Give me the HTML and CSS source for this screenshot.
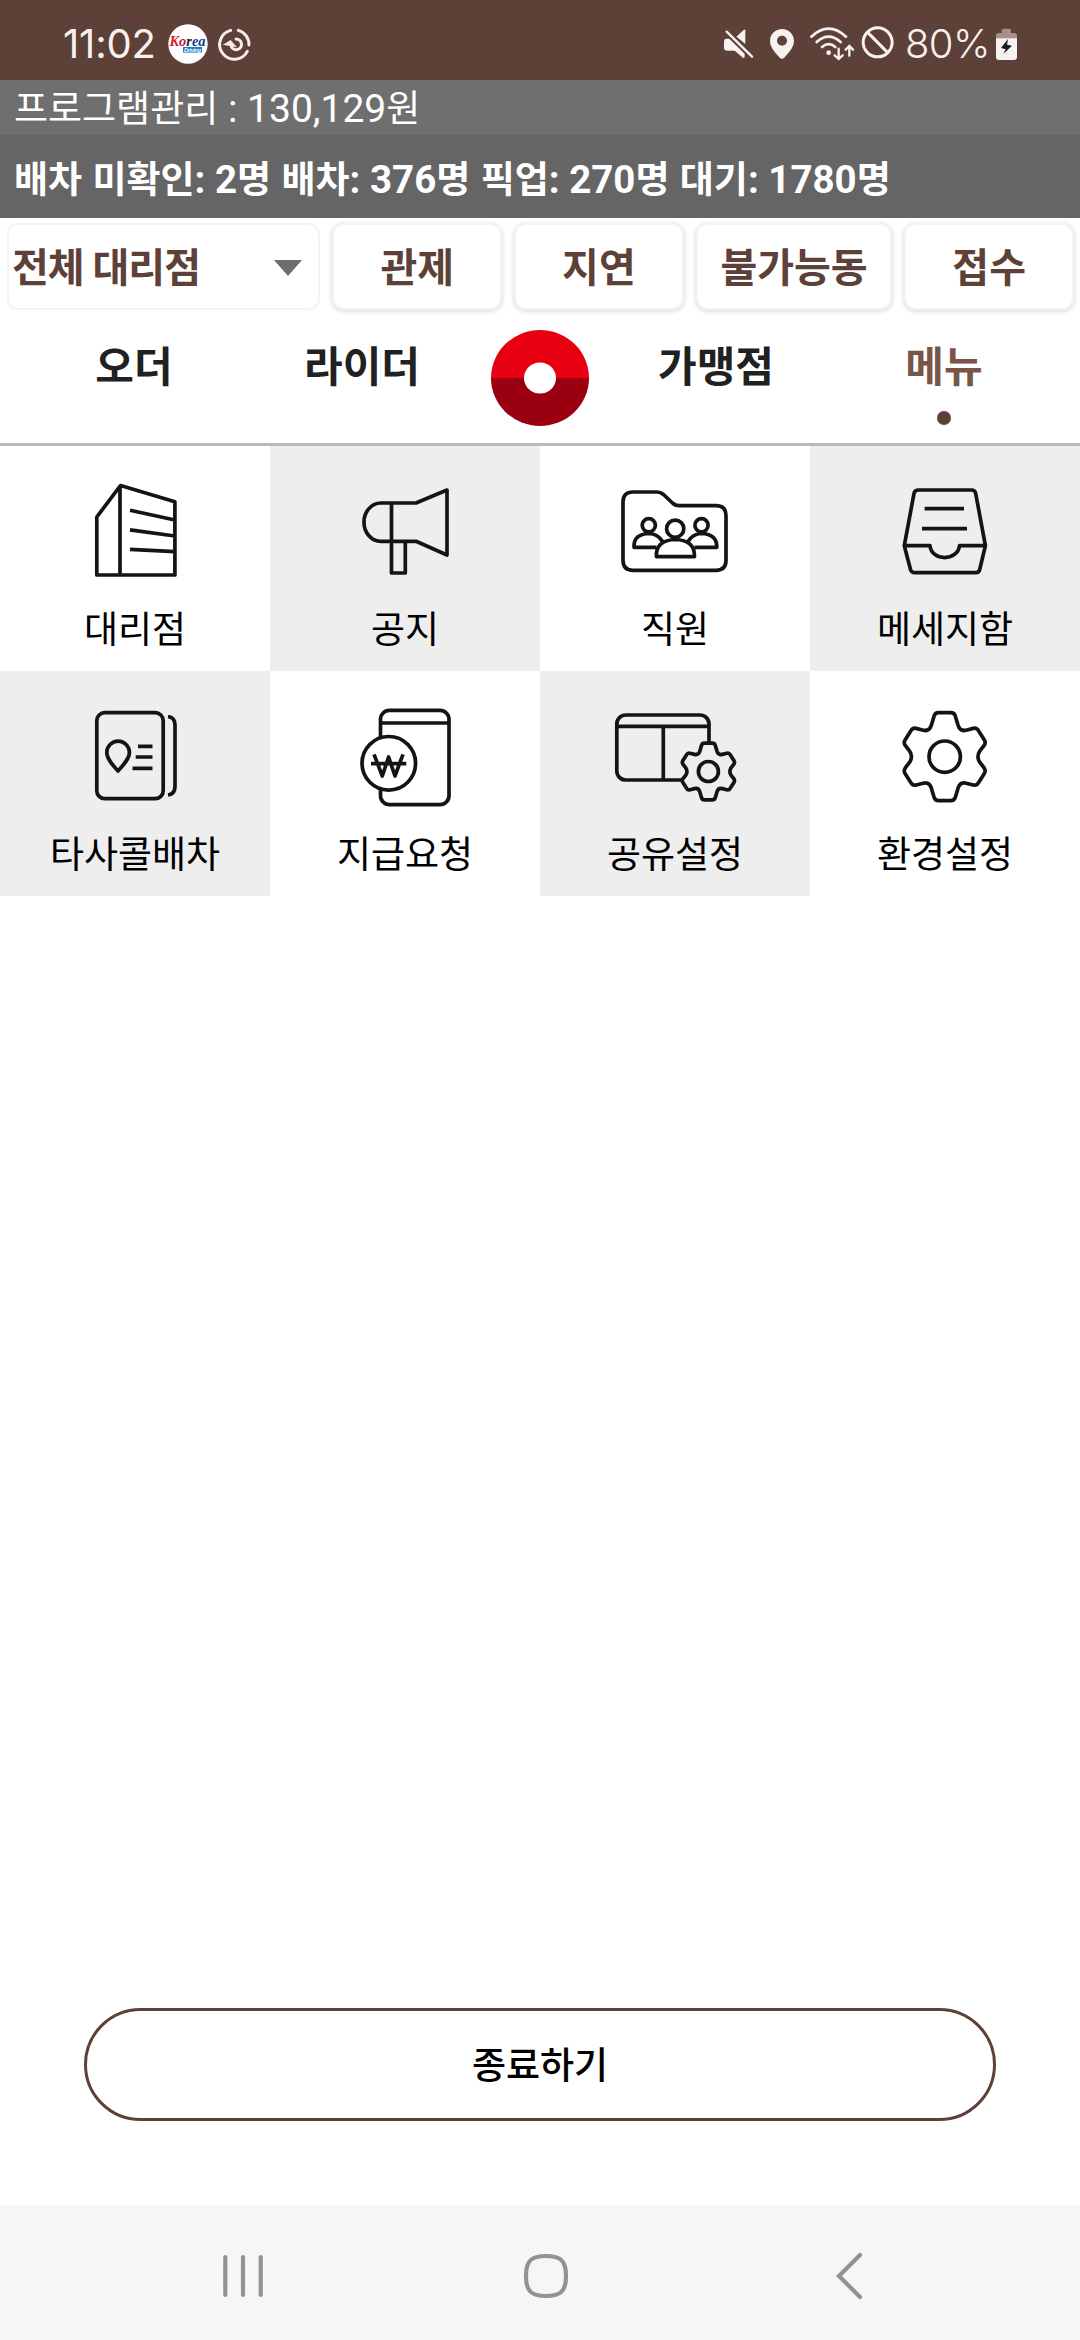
FILE: index.html
```html
<!DOCTYPE html>
<html lang="ko">
<head>
<meta charset="utf-8">
<title>메뉴</title>
<link rel="stylesheet" href="styles.css">
</head>
<body>
<div class="screen">
  <header class="status">
    <span class="clock">11:02</span>
    <svg class="badge" width="40" height="40" viewBox="0 0 40 40">
      <circle cx="20" cy="20" r="19.7" fill="#fff"/>
      <text x="1.5" y="22" class="badge-name" textLength="36" lengthAdjust="spacingAndGlyphs"><tspan fill="#e0142c">K</tspan><tspan fill="#c01830">o</tspan><tspan fill="#222">r</tspan><tspan fill="#143c8c">ea</tspan></text>
      <rect x="15" y="23" width="19" height="5.6" fill="#1f78c0"/>
      <text x="16" y="27.8" class="badge-sub" textLength="17">Driving</text>
    </svg>
    <svg class="swirl" width="36" height="50" viewBox="168 0 108 150" fill="none" stroke="#f7ece8" stroke-width="9" stroke-linecap="round">
      <path d="M212 31A44 44 0 1 0 262 94"/>
      <path d="M235 31A44 44 0 0 1 267 75"/>
      <path d="M228 57A16 16 0 1 1 214 80"/>
      <path d="M201 72L211 66L219 75Z" fill="#f7ece8"/>
    </svg>
    <span class="status-gap"></span>
    <svg class="mute" width="32" height="50" viewBox="36 0 96 150">
      <path d="M49 56L58 56L104 101V109Q104 117 97 112L74 92H52Q42 92 42 83V66Q42 56 49 56Z" fill="#f7f1ef"/>
      <path d="M106 31V72L79 50L101 30Q106 26 106 31Z" fill="#f7f1ef"/>
      <path d="M54 31L130 106" stroke="#5d4037" stroke-width="8"/>
      <path d="M50 35L126 110" stroke="#f7f1ef" stroke-width="7" stroke-linecap="round"/>
    </svg>
    <svg class="pin" width="28" height="50" viewBox="174 0 84 150">
      <path fill-rule="evenodd" fill="#f7f1ef" d="M216 27C196 27 180 43 180 63C180 82 196 99 210 114Q216 119 222 114C236 99 252 82 252 63C252 43 236 27 216 27ZM216 47A15 15 0 1 1 216 77A15 15 0 1 1 216 47Z"/>
    </svg>
    <svg class="wifi" width="47" height="50" viewBox="297 0 141 150" fill="none" stroke="#f7f1ef" stroke-width="8" stroke-linecap="round">
      <path d="M304 50Q356 2 408 50"/>
      <path d="M320 66Q356 34 392 66"/>
      <path d="M336 81Q356 64 376 81"/>
      <circle cx="356" cy="98" r="7" fill="#f7f1ef" stroke="none"/>
      <g stroke-width="7"><path d="M386 86V116M374 106L386 117L398 106"/><path d="M418 107V79M407 89L418 78L429 89"/></g>
    </svg>
    <svg class="block" width="35" height="50" viewBox="450 0 105 150" fill="none" stroke="#f7f1ef" stroke-width="9">
      <circle cx="503" cy="67" r="43.5"/><path d="M473 37L533 98"/>
    </svg>
    <span class="percent">80%</span>
    <svg class="battery" width="23" height="50" viewBox="855 0 69 150">
      <path d="M858 56V47Q858 39 866 39H875V31Q875 26 881 26H897Q903 26 903 31V39H913Q921 39 921 47V56Z" fill="#a58f88"/>
      <path d="M858 55H921V111Q921 120 912 120H867Q858 120 858 111Z" fill="#f7f1ef"/>
      <path d="M894 57L873 84L887 88L880 102L906 77L891 74Z" fill="#1b1b1b"/>
    </svg>
  </header>

  <div class="balance"><span class="ko">프로그램관리</span> : 130,129<span class="ko">원</span></div>
  <div class="counts"><span class="ko">배차 미확인</span>: 2<span class="ko">명 배차</span>: 376<span class="ko">명 픽업</span>: 270<span class="ko">명 대기</span>: 1780<span class="ko">명</span></div>

  <div class="filters">
    <div class="select"><span>전체 대리점</span><i class="caret"></i></div>
    <button class="chip">관제</button>
    <button class="chip">지연</button>
    <button class="chip wide">불가능동</button>
    <button class="chip">접수</button>
  </div>

  <nav class="tabs">
    <div class="tab">오더</div>
    <div class="tab">라이더</div>
    <div class="logo">
      <svg width="98" height="96" viewBox="0 0 98 96">
        <path d="M0 48A49 48 0 0 1 98 48Z" fill="#e60012"/>
        <path d="M0 48A49 48 0 0 0 98 48Z" fill="#9b0010"/>
        <ellipse cx="49" cy="48" rx="16" ry="15.5" fill="#fff"/>
      </svg>
    </div>
    <div class="tab">가맹점</div>
    <div class="tab active">메뉴<i class="dot"></i></div>
  </nav>

  <main class="grid">
    <div class="cell">
      <svg class="icon" viewBox="0 0 160 120">
        <path d="M41.8 51L65.5 19.5L119.9 35.7V109H41.8ZM65 20V109M75 44.3L119.9 54M75 63.9L119.9 70M75 83.3L119.9 85.6"/>
      </svg><span>대리점</span>
    </div>
    <div class="cell shade">
      <svg class="icon" viewBox="0 0 160 120">
        <path d="M91 37H56A17 19.1 0 0 0 56 75.3H91L122 89V24ZM66.5 37V107H80.3V75.3"/>
      </svg><span>공지</span>
    </div>
    <div class="cell">
      <svg class="icon" viewBox="0 0 160 120">
        <path d="M38 26H62Q65.500 26 68.500 28.500L78 37.500Q80.500 39.700 84 39.700H121Q131 39.700 131 49.700V94.300Q131 104.300 121 104.300H38Q28 104.300 28 94.300V36Q28 26 38 26Z"/>
        <circle cx="53.800" cy="59.300" r="6.600"/><circle cx="80.200" cy="62.700" r="8.600"/><circle cx="106.500" cy="59.300" r="6.600"/>
        <path d="M61.400 81.300H39Q38.500 68 54 67.500Q63 68 67.500 75.500M99.500 81.300H121.800Q122 68 106.500 67.500Q97.500 68 93 75.500M61.400 90.700Q60.500 74 80.400 73.500Q100 74 99.500 90.700Z"/>
      </svg><span>직원</span>
    </div>
    <div class="cell shade">
      <svg class="icon" viewBox="0 0 160 120">
        <path d="M53.500 24H106.500Q110 24 110.700 27.500L120.400 79.700L114.700 103.500Q114 106.700 111 106.700H49.500Q46.500 106.700 45.500 103.500L39.300 79.700L49 27.500Q49.700 24 53.500 24ZM39.300 79.700H65C66.500 95.500 92.500 95.500 94.500 79.700H120.400M59.600 42.700H99M57 62.700H102"/>
      </svg><span>메세지함</span>
    </div>
    <div class="cell shade">
      <svg class="icon" viewBox="0 0 160 120">
        <rect x="41.800" y="21.700" width="66.400" height="86" rx="8"/>
        <path d="M113 25.500Q120 26.500 120 34V95.500Q120 103 113 104M63 80C57 73.500 51.800 67.500 51.800 61.500A11.300 11.300 0 0 1 74.400 61.500C74.400 67.500 69 73.500 63 80ZM83 55.300H97.500M80.700 66H97.500M77.500 77.300H97.500"/>
      </svg><span>타사콜배차</span>
    </div>
    <div class="cell">
      <svg class="icon" viewBox="0 0 160 120">
        <rect x="55.500" y="19.300" width="68.500" height="94.400" rx="9"/><path d="M55.500 32H124"/>
        <circle cx="63.800" cy="72.300" r="26.800" fill="#fff"/>
        <path d="M49 63.300L57.300 85L63.600 66L70 85L78 63.300M46 72.700H81.300"/>
      </svg><span>지급요청</span>
    </div>
    <div class="cell shade">
      <svg class="icon" viewBox="0 0 160 120">
        <rect x="21.800" y="24" width="92.200" height="65" rx="9"/><path d="M21.800 35.300H114M68.300 35.300V89"/>
        <g transform="translate(113.400 80.500) scale(.645)">
          <path class="gear" fill="#eee" d="M-6 -44H6Q9.500 -44 10.500 -41L13.500 -31Q15.500 -25 21.500 -26.500L28.500 -28.300Q32 -29.300 33.800 -26L39.800 -16.500Q41.300 -14 39.300 -11L35 -5.500Q31.500 0 35 5.500L39.300 11Q41.300 14 39.800 16.500L33.800 26Q32 29.300 28.500 28.300L21.500 26.500Q15.500 25 13.500 31L10.500 41Q9.500 44 6 44H-6Q-9.500 44 -10.500 41L-13.500 31Q-15.500 25 -21.500 26.500L-28.500 28.300Q-32 29.300 -33.800 26L-39.800 16.500Q-41.300 14 -39.300 11L-35 5.500Q-31.500 0 -35 -5.500L-39.300 -11Q-41.300 -14 -39.800 -16.500L-33.800 -26Q-32 -29.300 -28.500 -28.300L-21.500 -26.500Q-15.500 -25 -13.500 -31L-10.500 -41Q-9.500 -44 -6 -44Z"/>
          <circle class="gear" r="15.500"/>
        </g>
      </svg><span>공유설정</span>
    </div>
    <div class="cell">
      <svg class="icon" viewBox="0 0 160 120">
        <g transform="translate(79.700 65.700)">
          <path d="M-6 -44H6Q9.500 -44 10.500 -41L13.500 -31Q15.500 -25 21.500 -26.500L28.500 -28.300Q32 -29.300 33.800 -26L39.800 -16.500Q41.300 -14 39.300 -11L35 -5.500Q31.500 0 35 5.500L39.300 11Q41.300 14 39.800 16.500L33.800 26Q32 29.300 28.500 28.300L21.500 26.500Q15.500 25 13.500 31L10.500 41Q9.500 44 6 44H-6Q-9.500 44 -10.500 41L-13.500 31Q-15.500 25 -21.500 26.500L-28.500 28.300Q-32 29.300 -33.800 26L-39.800 16.500Q-41.300 14 -39.300 11L-35 5.500Q-31.500 0 -35 -5.500L-39.300 -11Q-41.300 -14 -39.800 -16.500L-33.800 -26Q-32 -29.300 -28.500 -28.300L-21.500 -26.500Q-15.500 -25 -13.500 -31L-10.500 -41Q-9.500 -44 -6 -44Z"/>
          <circle r="15.700"/>
        </g>
      </svg><span>환경설정</span>
    </div>
  </main>

  <div class="exit-wrap"><button class="exit">종료하기</button></div>

  <footer class="navbar">
    <svg width="42" height="46" viewBox="0 0 42 46"><path d="M3.300 4V42M21 4V42M38.700 4V42"/></svg>
    <svg class="home" width="46" height="46" viewBox="0 0 46 46"><path d="M23 3C38 3 43 8 43 23S38 43 23 43S3 38 3 23S8 3 23 3Z"/></svg>
    <svg width="30" height="50" viewBox="0 0 30 50"><path d="M26 4L5 25L26 46"/></svg>
  </footer>
</div>
</body>
</html>
```
FILE: styles.css
```css
* { box-sizing: border-box; }
body { margin: 0; background: #fff; }
.screen {
  width: 1080px;
  height: 2340px;
  display: flex;
  flex-direction: column;
  font-family: Roboto, "Noto Sans CJK KR", sans-serif;
  color: #000;
  overflow: hidden;
}
button { font: inherit; color: inherit; background: #fff; padding: 0; border: 0; }

/* status bar */
.status {
  height: 80px;
  padding: 0 62px 0 63px;
  display: flex;
  align-items: flex-start;
  background: #5d4037;
  color: #f7f1ef;
  font-family: Inter, sans-serif;
  font-size: 40px;
  line-height: 50px;
}
.status svg { flex: none; margin-top: 20px; }
.status-gap { flex: 1; }
.clock { width: 105px; margin-top: 19px; letter-spacing: -.2px; white-space: nowrap; }
.status .badge { margin-top: 24px; }
.badge-name { font: italic 900 14px "Liberation Serif", serif; }
.badge-sub { font: italic 700 5.5px "Liberation Sans", sans-serif; fill: #fff; }
.status .swirl { margin-left: 8px; }
.status .pin { margin-left: 14px; }
.status .wifi { margin-left: 13px; }
.status .block { margin-left: 4px; }
.percent { width: 90px; margin: 19px 0 0 10px; letter-spacing: -.6px; white-space: nowrap; font-weight: 350; }

/* summary lines */
.balance {
  height: 55px;
  padding: 2px 0 0 14px;
  background: #6f6f6f;
  color: #fff;
  font-size: 39px;
  line-height: 55px;
  white-space: nowrap;
}
.counts {
  height: 83px;
  padding: 3px 0 0 14px;
  background: #656565;
  color: #fff;
  font-size: 38.5px;
  font-weight: 700;
  line-height: 83px;
  white-space: nowrap;
}
.ko { font-size: 37px; font-family: "Noto Sans CJK KR", sans-serif; line-height: 1; }

/* filter row */
.filters {
  height: 98px;
  padding: 5px 6px 0 7px;
  display: flex;
  gap: 12px;
  color: #5d4037;
  font-size: 40px;
  font-weight: 700;
  letter-spacing: -1px;
}
.select {
  width: 314px;
  height: 87px;
  padding: 0 16px 3px 3px;
  border: 2px solid #f4f4f4;
  border-radius: 11px;
  display: flex;
  align-items: center;
  justify-content: space-between;
}
.caret { border: 14px solid transparent; border-top: 16px solid #6e6e6e; border-bottom: 0; margin-top: 5px; }
.chip {
  width: 170px;
  height: 87px;
  padding-bottom: 3px;
  border: 2px solid #f4f4f4;
  border-radius: 12px;
  box-shadow: 0 1px 5px rgba(0, 0, 0, .18);
}
.chip.wide { width: 197px; }

/* tabs */
.tabs {
  height: 130px;
  display: grid;
  grid-template-columns: 268px 188px 168px 184px 272px;
  border-bottom: 3px solid #b9b9b9;
  color: #212121;
  font-size: 42px;
  font-weight: 700;
  line-height: 60px;
  text-align: center;
}
.tab { padding-top: 22px; }
.logo { padding-top: 14px; }
.logo svg { display: block; margin: 0 auto; }
.active { color: #795548; }
.dot { display: block; width: 14px; height: 14px; margin: 13px auto 0; border-radius: 50%; background: #5d4037; }

/* menu grid */
.grid { display: grid; grid-template-columns: repeat(4, 270px); grid-auto-rows: 225px; }
.cell { display: flex; flex-direction: column; align-items: center; padding-top: 20px; font-size: 37px; line-height: 50px; }
.cell span { margin-top: 20px; }
.shade { background: #eee; }
.icon { width: 160px; height: 120px; fill: none; stroke: #141414; stroke-width: 3.7; stroke-linejoin: round; stroke-linecap: butt; }
.gear { vector-effect: non-scaling-stroke; }

/* bottom */
.exit-wrap { flex: 1; display: flex; flex-direction: column; justify-content: flex-end; padding: 0 84px 84px; }
.exit {
  height: 113px;
  padding-bottom: 3px;
  border: 3px solid #5d4037;
  border-radius: 57px;
  font-size: 37px;
  font-weight: 500;
}
.navbar {
  height: 135px;
  padding: 0 216px 0 222px;
  display: flex;
  align-items: center;
  justify-content: space-between;
  background: #f6f6f8;
}
.navbar svg { fill: none; stroke: #929292; stroke-width: 4.2; stroke-linecap: round; margin-top: 7px; }
.navbar .home { margin-right: 7px; }
```
